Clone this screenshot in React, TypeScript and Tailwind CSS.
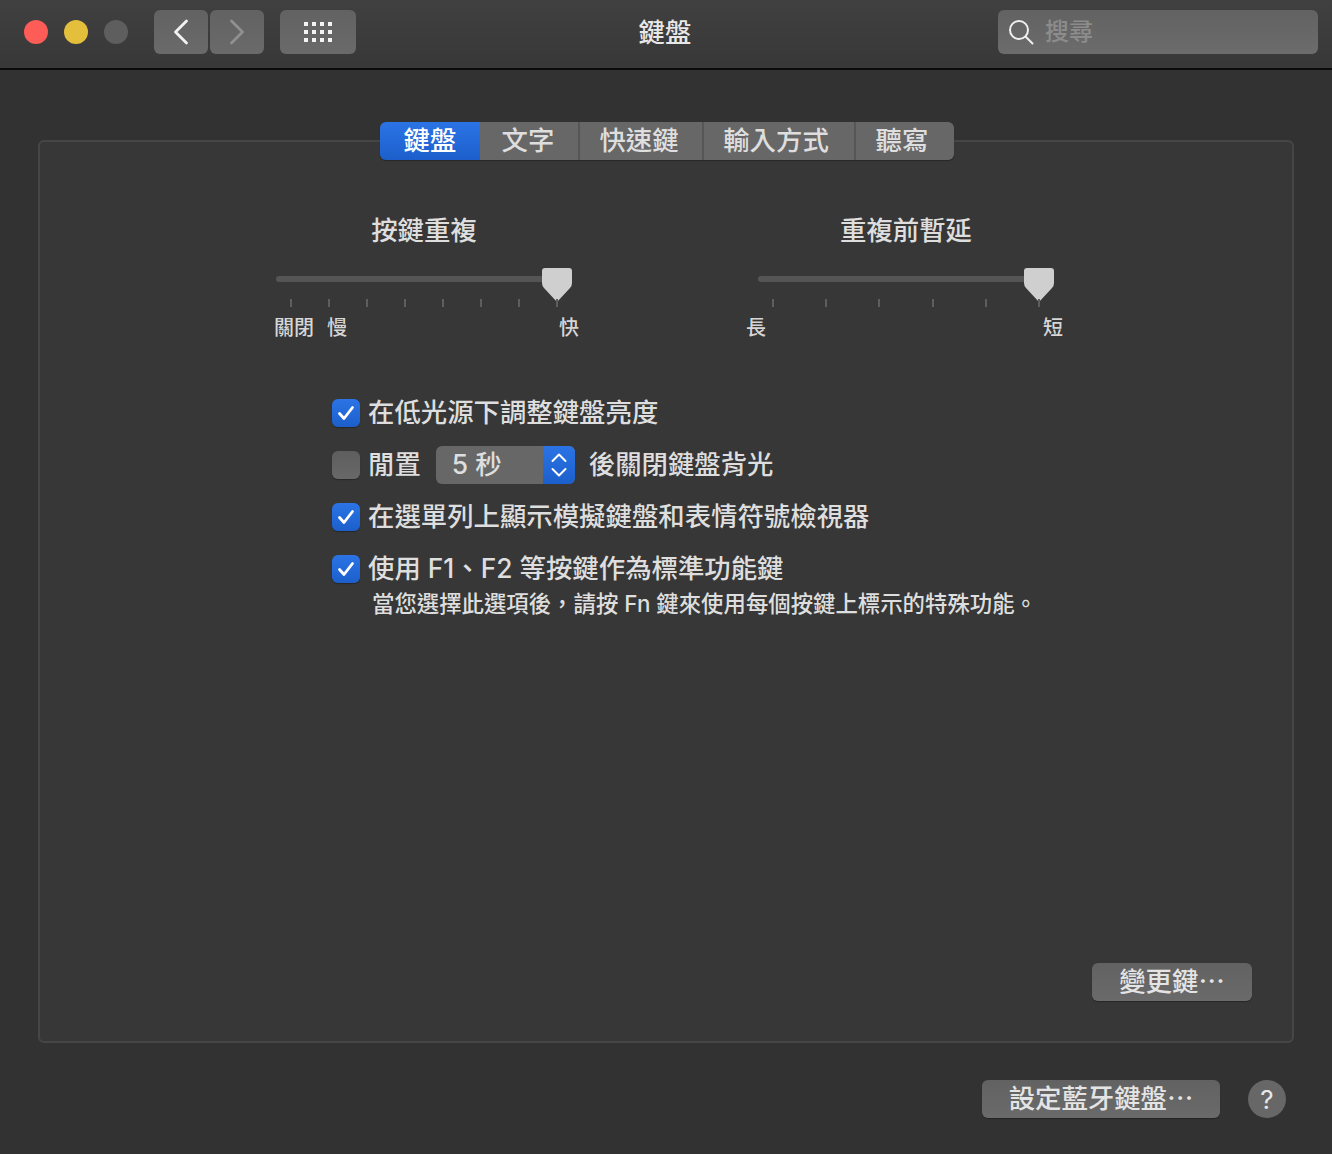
import React from "react";

const FONT = "font-['Inter','Noto_Sans_CJK_TC',sans-serif]";

function Check() {
  return (
    <span className="flex h-7 w-7 shrink-0 items-center justify-center rounded-[6px] bg-gradient-to-b from-[#2b74e6] to-[#1c5fcb] shadow-[0_1px_1px_rgba(0,0,0,0.3)]">
      <svg width="20" height="20" viewBox="0 0 20 20" fill="none">
        <path d="M3.5 10.5 L8 15.5 L16.5 4.5" stroke="#fff" strokeWidth="2.8" strokeLinecap="round" strokeLinejoin="round" />
      </svg>
    </span>
  );
}

function Unchecked() {
  return <span className="h-7 w-7 shrink-0 rounded-[6px] bg-gradient-to-b from-[#5e5e5e] to-[#686868] shadow-[0_1px_1px_rgba(0,0,0,0.3)]" />;
}

function Thumb() {
  return (
    <svg className="absolute right-0 top-0" width="30" height="38" viewBox="0 0 30 38">
      <path d="M3 0 H27 Q30 0 30 3 V15 Q30 18 28 20 L15 34 L2 20 Q0 18 0 15 V3 Q0 0 3 0 Z" fill="#cfcfcf" />
    </svg>
  );
}

function Slider({ title, ticks, children, tickClass }: { title: string; ticks: number; children: React.ReactNode; tickClass: string }) {
  return (
    <div className="flex w-[296px] flex-col">
      <div className="h-[56px] text-center text-[26.4px] font-medium leading-[36px] text-[#dedede]">{title}</div>
      <div className="relative h-[46px]">
        <div className="absolute left-0 right-[10px] top-[8px] h-[6px] rounded-full bg-[#555555]" />
        <Thumb />
        <div className={`absolute top-[31px] flex justify-between ${tickClass}`}>
          {Array.from({ length: ticks }).map((_, i) => (
            <span key={i} className="h-[8px] w-[2px] bg-[#5e5e5e]" />
          ))}
        </div>
      </div>
      {children}
    </div>
  );
}

function Row({ children, className = "" }: { children: React.ReactNode; className?: string }) {
  return <div className={`flex h-[52px] items-center text-[26.4px] font-medium text-[#dedede] ${className}`}>{children}</div>;
}

const tabs = ["文字", "快速鍵", "輸入方式", "聽寫"];
const tabW = ["w-[100px] pr-[2px]", "w-[124px] pr-[4px]", "w-[152px] pr-[6px]", "w-[98px] pr-[6px]"];

export default function App() {
  return (
    <div lang="zh-TW" className={`flex h-[1154px] w-[1332px] flex-col overflow-hidden bg-[#323232] ${FONT}`}>
      <header className="flex h-[70px] shrink-0 items-start border-b-2 border-b-[#0b0b0b] bg-gradient-to-b from-[#404040] to-[#383838]">
        <div className="ml-6 mt-5 flex gap-4">
          <span className="h-6 w-6 rounded-full bg-[#fd5c57]" />
          <span className="h-6 w-6 rounded-full bg-[#e3bf3c]" />
          <span className="h-6 w-6 rounded-full bg-[#5e5e5e]" />
        </div>
        <div className="ml-[26px] mt-[10px] flex gap-[2px]">
          <span className="flex h-11 w-[54px] items-center justify-center rounded-[6px] bg-gradient-to-b from-[#626262] to-[#6a6a6a]">
            <svg width="16" height="26" viewBox="0 0 16 26" fill="none"><path d="M13.5 2 L2.5 13 L13.5 24" stroke="#f2f2f2" strokeWidth="2.8" strokeLinecap="round" strokeLinejoin="round" /></svg>
          </span>
          <span className="flex h-11 w-[54px] items-center justify-center rounded-[6px] bg-gradient-to-b from-[#626262] to-[#6a6a6a]">
            <svg width="16" height="26" viewBox="0 0 16 26" fill="none"><path d="M2.5 2 L13.5 13 L2.5 24" stroke="#909090" strokeWidth="2.8" strokeLinecap="round" strokeLinejoin="round" /></svg>
          </span>
        </div>
        <span className="ml-4 mt-[10px] flex h-11 w-[76px] items-center justify-center rounded-[6px] bg-gradient-to-b from-[#626262] to-[#6a6a6a]">
          <span className="grid grid-cols-4 gap-x-[4px] gap-y-[4px]">
            {Array.from({ length: 12 }).map((_, i) => (
              <span key={i} className="h-1 w-1 bg-[#f4f4f4]" />
            ))}
          </span>
        </span>
        <div className="mt-[10px] h-11 w-[618px] text-center text-[26.4px] font-medium leading-[44px] text-[#e8e8e8]">鍵盤</div>
        <div className="ml-6 mt-[10px] flex h-11 w-[320px] items-center rounded-[6px] bg-gradient-to-b from-[#626262] to-[#6c6c6c]">
          <svg className="ml-[10px]" width="26" height="26" viewBox="0 0 26 26" fill="none">
            <circle cx="11" cy="11" r="9" stroke="#efefef" strokeWidth="2" />
            <path d="M17.5 17.5 L24.5 24.5" stroke="#efefef" strokeWidth="2" strokeLinecap="round" />
          </svg>
          <span className="ml-[11px] text-[24px] font-medium text-[#8c8c8c]">搜尋</span>
        </div>
      </header>

      <main className="mx-[38px] mt-[70px] flex h-[903px] flex-col rounded-[6px] border-2 border-[#464646] bg-[#373737]">
        <div className="mx-auto -mt-[20px] flex h-[38px] w-[574px] translate-x-px overflow-hidden rounded-[6px] text-[26.4px] font-medium leading-[36px] text-[#dedede] shadow-[0_1px_1px_rgba(0,0,0,0.3)]">
          <span className="w-[100px] bg-gradient-to-b from-[#2b74e6] to-[#1c5fcb] text-center text-white">鍵盤</span>
          {tabs.map((t, i) => (
            <span key={t} className={`${tabW[i]} border-r-2 border-r-[#565656] bg-[#676767] text-center last:border-r-0`}>{t}</span>
          ))}
        </div>

        <div className="ml-[236px] mt-[52px] flex gap-[186px]">
          <Slider title="按鍵重複" ticks={8} tickClass="left-[14px] w-[268px]">
            <div className="relative h-[24px] text-[20px] font-medium leading-[28px] text-[#d6d6d6]">
              <span className="absolute -left-[2px] top-0">關閉</span>
              <span className="absolute left-[51px] top-0">慢</span>
              <span className="absolute left-[283px] top-0">快</span>
            </div>
          </Slider>
          <Slider title="重複前暫延" ticks={6} tickClass="left-[14px] w-[268px]">
            <div className="flex h-[24px] justify-between text-[20px] font-medium leading-[28px] text-[#d6d6d6]">
              <span className="-ml-[12px]">長</span>
              <span className="-mr-[9px]">短</span>
            </div>
          </Slider>
        </div>

        <div className="ml-[292px] mt-[49px] flex flex-col">
          <Row><Check /><span className="ml-2">在低光源下調整鍵盤亮度</span></Row>
          <Row>
            <Unchecked />
            <span className="ml-2">閒置</span>
            <span className="ml-[15px] flex h-[38px] w-[139px] overflow-hidden rounded-[6px] bg-[#676767]">
              <span className="flex-1 pl-[16px] leading-[36px]">5 秒</span>
              <span className="flex w-[32px] items-center justify-center bg-gradient-to-b from-[#2b74e6] to-[#1c5fcb]">
                <svg width="18" height="28" viewBox="0 0 18 28" fill="none">
                  <path d="M2.5 10 L9 3.5 L15.5 10 M2.5 18 L9 24.5 L15.5 18" stroke="#fff" strokeWidth="2" strokeLinecap="round" strokeLinejoin="round" />
                </svg>
              </span>
            </span>
            <span className="ml-[14px]">後關閉鍵盤背光</span>
          </Row>
          <Row><Check /><span className="ml-2">在選單列上顯示模擬鍵盤和表情符號檢視器</span></Row>
          <Row><Check /><span className="ml-2">使用 F1、F2 等按鍵作為標準功能鍵</span></Row>
          <div className="-mt-[7px] ml-[40px] text-[22.4px] font-medium leading-[32px] text-[#dedede]">當您選擇此選項後，請按 Fn 鍵來使用每個按鍵上標示的特殊功能。</div>
        </div>

        <div className="mb-10 mr-10 mt-auto flex justify-end">
          <span className="h-[38px] w-[160px] rounded-[6px] bg-gradient-to-b from-[#626262] to-[#6a6a6a] text-center text-[26.4px] font-medium leading-[36px] text-[#e4e4e4] shadow-[0_1px_1px_rgba(0,0,0,0.3)]">變更鍵⋯</span>
        </div>
      </main>

      <footer className="mr-[46px] mt-[37px] flex items-center justify-end gap-[28px]">
        <span className="h-[38px] w-[238px] rounded-[6px] bg-gradient-to-b from-[#626262] to-[#6a6a6a] text-center text-[26.4px] font-medium leading-[36px] text-[#e4e4e4] shadow-[0_1px_1px_rgba(0,0,0,0.3)]">設定藍牙鍵盤⋯</span>
        <span className="flex h-[38px] w-[38px] items-center justify-center rounded-full bg-[#676767] text-[26px] text-[#e8e8e8]">?</span>
      </footer>
    </div>
  );
}
